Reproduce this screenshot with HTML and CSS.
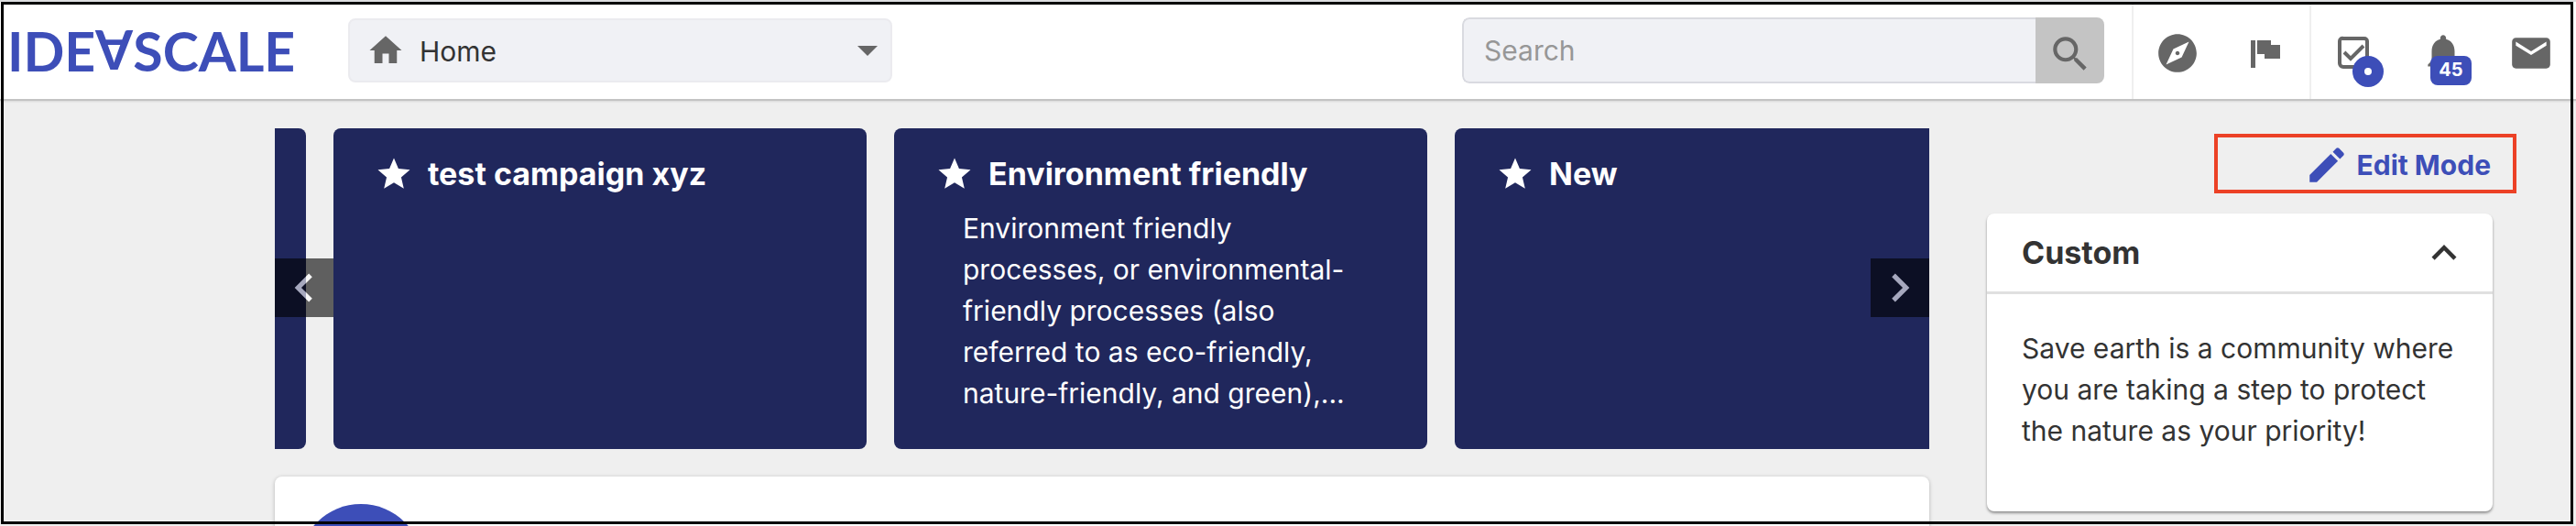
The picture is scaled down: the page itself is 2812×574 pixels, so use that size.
FILE: index.html
```
<!DOCTYPE html>
<html lang="en">
<head>
    <meta charset="UTF-8">
    <meta name="viewport" content="width=device-width, initial-scale=1.0">
    <title>IdeaScale</title>
    <link rel="stylesheet" href="styles.css">
</head>
<body>

<header class="header">
    <a href="#" class="logo" aria-label="IdeaScale">IDE<span class="flipped">A</span>SCALE</a>

    <label class="nav-select">
        <svg class="icon-home" viewBox="0 0 24 24"><path d="M10 20v-6h4v6h5v-8h3L12 3 2 12h3v8z"/></svg>
        <select aria-label="Go to page">
            <option>Home</option>
        </select>
        <svg class="icon-caret" viewBox="0 0 10 5"><path d="M0 0l5 5 5-5z"/></svg>
    </label>

    <form class="search">
        <input type="text" placeholder="Search" aria-label="Search">
        <button type="button" aria-label="Search">
            <svg class="icon" viewBox="0 0 24 24"><path d="M15.5 14h-.79l-.28-.27A6.471 6.471 0 0 0 16 9.5 6.5 6.5 0 1 0 9.5 16c1.61 0 3.09-.59 4.23-1.57l.27.28v.79l5 4.99L20.49 19l-4.99-5zm-6 0C7.01 14 5 11.99 5 9.5S7.01 5 9.5 5 14 7.01 14 9.5 11.99 14 9.5 14z"/></svg>
        </button>
    </form>

    <nav class="actions">
        <div class="action-group">
            <a href="#" class="action" aria-label="Explore">
                <svg class="icon" viewBox="0 0 24 24"><path d="M12 10.9c-.61 0-1.1.49-1.1 1.1s.49 1.1 1.1 1.1c.61 0 1.1-.49 1.1-1.1s-.49-1.1-1.1-1.1zM12 2C6.48 2 2 6.48 2 12s4.48 10 10 10 10-4.48 10-10S17.52 2 12 2zm2.19 12.19L6 18l3.81-8.19L18 6l-3.81 8.19z"/></svg>
            </a>
            <a href="#" class="action" aria-label="Campaigns">
                <svg class="icon" viewBox="0 0 50 50"><path d="M9 11h5v30H9zM16 11h15v5h10v15H24v-5h-8z"/></svg>
            </a>
        </div>
        <div class="action-group">
            <a href="#" class="action" aria-label="Tasks">
                <svg class="icon" viewBox="0 0 50 50"><path fill="none" stroke="#666" stroke-width="4" d="M12 9h23a3 3 0 0 1 3 3v25a3 3 0 0 1-3 3H12a4 4 0 0 1-4-4V12a3 3 0 0 1 4-3z"/><path fill="none" stroke="#666" stroke-width="4" d="M13 24l7 7 14-14"/></svg>
                <span class="badge badge-dot"></span>
            </a>
            <a href="#" class="action" aria-label="Notifications">
                <svg class="icon" viewBox="0 0 24 24"><path d="M12 22c1.1 0 2-.9 2-2h-4c0 1.1.89 2 2 2zm6-6v-5c0-3.07-1.64-5.64-4.5-6.32V4c0-.83-.67-1.5-1.5-1.5s-1.5.67-1.5 1.5v.68C7.63 5.36 6 7.92 6 11v5l-2 2v1h16v-1l-2-2z"/></svg>
                <span class="badge badge-count">45</span>
            </a>
            <a href="#" class="action" aria-label="Messages">
                <svg class="icon" viewBox="0 0 24 24"><path d="M20 4H4c-1.1 0-1.99.9-1.99 2L2 18c0 1.1.9 2 2 2h16c1.1 0 2-.9 2-2V6c0-1.1-.9-2-2-2zm0 4l-8 5-8-5V6l8 5 8-5v2z"/></svg>
            </a>
        </div>
    </nav>
</header>

<div class="page">
    <main class="content">
        <section class="carousel">
            <div class="track">
                <article class="campaign"></article>
                <article class="campaign">
                    <h2>
                        <svg class="icon-star" viewBox="0 0 24 24"><path d="M12 17.27L18.18 21l-1.64-7.03L22 9.24l-7.19-.61L12 2 9.19 8.63 2 9.24l5.46 4.73L5.82 21z"/></svg>
                        test campaign xyz
                    </h2>
                </article>
                <article class="campaign">
                    <h2>
                        <svg class="icon-star" viewBox="0 0 24 24"><path d="M12 17.27L18.18 21l-1.64-7.03L22 9.24l-7.19-.61L12 2 9.19 8.63 2 9.24l5.46 4.73L5.82 21z"/></svg>
                        Environment friendly
                    </h2>
                    <p>Environment friendly processes, or environmental-friendly processes (also referred to as eco-friendly, nature-friendly, and green),...</p>
                </article>
                <article class="campaign">
                    <h2>
                        <svg class="icon-star" viewBox="0 0 24 24"><path d="M12 17.27L18.18 21l-1.64-7.03L22 9.24l-7.19-.61L12 2 9.19 8.63 2 9.24l5.46 4.73L5.82 21z"/></svg>
                        New
                    </h2>
                </article>
            </div>
            <button type="button" class="arrow arrow-prev" aria-label="Previous">
                <svg viewBox="0 0 24 24"><path d="M15.41 7.41L14 6l-6 6 6 6 1.41-1.41L10.83 12z"/></svg>
            </button>
            <button type="button" class="arrow arrow-next" aria-label="Next">
                <svg viewBox="0 0 24 24"><path d="M10 6L8.59 7.41 13.17 12l-4.58 4.59L10 18l6-6z"/></svg>
            </button>
        </section>

        <section class="idea">
            <div class="avatar"></div>
        </section>
    </main>

    <aside class="sidebar">
        <a href="#" class="edit-mode">
            <svg class="icon" viewBox="0 0 24 24"><path d="M3 17.25V21h3.75L17.81 9.94l-3.75-3.75L3 17.25zM20.71 7.04c.39-.39.39-1.02 0-1.41l-2.34-2.34c-.39-.39-1.02-.39-1.41 0l-1.83 1.83 3.75 3.75 1.83-1.83z"/></svg>
            Edit Mode
        </a>

        <section class="widget">
            <div class="widget-header">
                <h2>Custom</h2>
                <button type="button" aria-label="Collapse">
                    <svg viewBox="0 0 24 24"><path d="M12 8l-6 6 1.41 1.41L12 10.83l4.59 4.58L18 14z"/></svg>
                </button>
            </div>
            <p>Save earth is a community where you are taking a step to protect the nature as your priority!</p>
        </section>
    </aside>
</div>

<div class="frame"></div>

</body>
</html>
```
FILE: styles.css
```
* {
    box-sizing: border-box;
}
body {
    font-family: Inter, "Liberation Sans", sans-serif;
    font-size: 30px;
    line-height: 45px;
    color: #333;
    background-color: #efefef;
    margin: 0;
    height: 100vh;
    overflow: hidden;
}
h2, p {
    margin: 0;
}
h2 {
    font-size: 34px;
    font-weight: 700;
}
a {
    text-decoration: none;
}
svg {
    display: block;
    flex: none;
    fill: currentColor;
}
input, select, button {
    font: inherit;
    color: inherit;
    border: none;
    padding: 0;
    margin: 0;
}
.icon {
    width: 50px;
    height: 50px;
}

/* header */
.header {
    display: flex;
    align-items: center;
    height: 110px;
    padding: 0 1px 0 8px;
    background: #fff;
    border-top: 2px solid #dcdddf;
    border-bottom: 2px solid #c3c3c3;
    box-shadow: 0 1px 2px rgba(0, 0, 0, 0.1);
}
.logo {
    flex: none;
    width: 372px;
    font-family: Lato, sans-serif;
    font-size: 59px;
    font-weight: 700;
    line-height: 59px;
    color: #3d4eb8;
}
.flipped {
    display: inline-block;
    transform: rotate(180deg);
}
.nav-select {
    display: flex;
    align-items: center;
    width: 594px;
    height: 70px;
    padding: 0 14px 0 18px;
    background: #f0f1f5;
    border: 2px solid #ebebef;
    border-radius: 8px;
}
.icon-home {
    width: 42px;
    height: 42px;
    color: #666;
}
.nav-select select {
    flex: 1;
    height: 66px;
    padding: 2px 0 0 16px;
    appearance: none;
    background: none;
}
.icon-caret {
    width: 22px;
    height: 11px;
    color: #666;
}
.search {
    display: flex;
    width: 701px;
    height: 72px;
    margin: 0 30px 0 auto;
    border-radius: 8px;
    overflow: hidden;
}
.search input {
    flex: 1;
    min-width: 0;
    padding: 0 22px;
    background: #f0f1f5;
    border: 2px solid #d9dae0;
    border-right: none;
    border-radius: 8px 0 0 8px;
}
.search input::placeholder {
    color: #979797;
}
.search button {
    display: flex;
    align-items: center;
    justify-content: center;
    width: 75px;
    padding-top: 8px;
    background: #c4c4c4;
    color: #666;
}
.actions {
    display: flex;
    align-self: stretch;
}
.action-group {
    display: flex;
    border-left: 2px solid #efefef;
}
.action {
    position: relative;
    display: flex;
    align-items: center;
    justify-content: center;
    width: 96px;
    padding-top: 6px;
    color: #666;
}
.badge {
    position: absolute;
    top: 59px;
    left: 34px;
    background: #3d4eb8;
    color: #fff;
}
.badge-dot {
    left: 45px;
    width: 34px;
    height: 34px;
    border: 13px solid #3d4eb8;
    border-radius: 50%;
    background: #fff;
}
.badge-count {
    width: 45px;
    height: 32px;
    border-radius: 8px;
    font-size: 20px;
    font-weight: 700;
    line-height: 30px;
    text-align: center;
}

/* page */
.page {
    display: flex;
    align-items: flex-start;
    gap: 63px;
    height: calc(100vh - 110px);
    padding: 30px 91px 0 300px;
    overflow: hidden;
}
.content {
    flex: 1;
    min-width: 0;
}
.carousel {
    position: relative;
    overflow: hidden;
}
.track {
    display: flex;
    gap: 30px;
    /* scrolled past most of the first card */
    margin-left: -548px;
}
.campaign {
    flex: none;
    width: 582px;
    height: 350px;
    padding: 27px 74px 0 45px;
    background: #20275c;
    border-radius: 8px;
    color: #fff;
}
.campaign h2 {
    display: flex;
    align-items: center;
    gap: 16px;
}
.campaign p {
    margin-top: 15px;
    padding-left: 30px;
}
.icon-star {
    width: 42px;
    height: 42px;
}
.arrow {
    position: absolute;
    top: 142px;
    display: flex;
    align-items: center;
    justify-content: center;
    width: 64px;
    height: 64px;
    background: #000;
    color: #fff;
    opacity: 0.6;
}
.arrow svg {
    width: 62px;
    height: 62px;
}
.arrow-prev {
    left: 0;
}
.arrow-next {
    right: 0;
}
.idea {
    margin-top: 30px;
    padding: 30px 26px;
    background: #fff;
    border-radius: 8px;
    box-shadow: 0 1px 4px rgba(0, 0, 0, 0.25);
}
.avatar {
    width: 136px;
    height: 136px;
    border-radius: 50%;
    background: #3d4eb8;
}

/* sidebar */
.sidebar {
    flex: none;
    width: 552px;
    padding-top: 6px;
}
.edit-mode {
    display: flex;
    align-items: center;
    justify-content: flex-end;
    gap: 8px;
    width: 330px;
    height: 65px;
    margin: 0 -26px 22px auto;
    padding: 3px 24px 0 0;
    border: 4px solid #ec4126;
    color: #3d4eb8;
    font-weight: 700;
}
.widget {
    background: #fff;
    border-radius: 8px;
    box-shadow: 0 2px 3px rgba(0, 0, 0, 0.4);
}
.widget-header {
    display: flex;
    align-items: center;
    justify-content: space-between;
    height: 88px;
    padding: 0 26px 0 38px;
    border-bottom: 3px solid #e0e0e0;
}
.widget-header button {
    background: none;
}
.widget-header svg {
    width: 54px;
    height: 54px;
}
.widget p {
    padding: 37px 38px 65px;
}

/* window outline */
.frame {
    position: fixed;
    inset: 2px 3px 2px 1px;
    border: 3px solid #000;
    pointer-events: none;
}
```
